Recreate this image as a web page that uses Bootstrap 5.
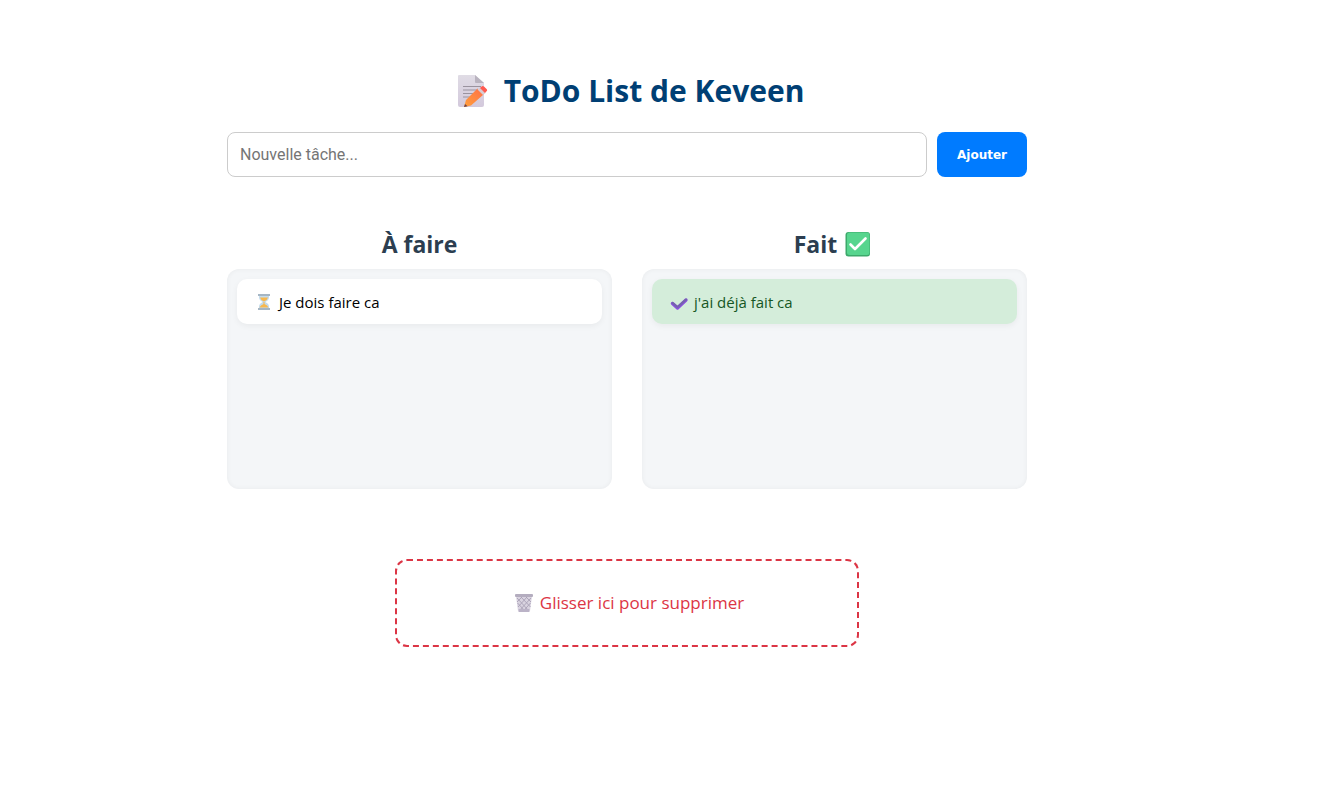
<!DOCTYPE html>
<html lang="fr">
<head>
<meta charset="utf-8">
<meta name="viewport" content="width=device-width, initial-scale=1">
<title>ToDo List de Keveen</title>
<link href="https://cdn.jsdelivr.net/npm/bootstrap@5.3.0/dist/css/bootstrap.min.css" rel="stylesheet">
<style>
  body { font-family: "Open Sans", "Noto Sans", sans-serif; background: #fff; color: #000; padding: 69px 76px 60px 0; }
  .todo-app { max-width: 800px; }
  .todo-title { font-size: 30px; line-height: 44px; font-weight: 700; color: #003f74; margin-bottom: 19px; }
  .todo-form { gap: 10px; }
  .todo-input { height: 45px; padding: 8px 12px; border: 1px solid #ccc; border-radius: 8px; font-family: Roboto, sans-serif; font-size: 16px; line-height: 24px; }
  .todo-input::placeholder { color: #757575; }
  .todo-add { width: 90px; height: 45px; padding: 0; border: 0; border-radius: 8px; background: #007bff; color: #fff; font-family: "DejaVu Sans", sans-serif; font-size: 12px; font-weight: 700; }
  .todo-add:hover { background: #0069d9; color: #fff; }
  .todo-boards { gap: 30px; margin-top: 50px; }
  .todo-heading { font-size: 23px; line-height: 34px; font-weight: 700; color: #2c3e50; margin-bottom: 8px; }
  .todo-list { min-height: 220px; padding: 10px; border-radius: 12px; background: #f4f6f8; box-shadow: inset 0 0 5px rgba(0,0,0,.05); }
  .todo-item { padding: 12px 18px 11px; border-radius: 10px; background: #fff; font-size: 15px; line-height: 22px; box-shadow: 0 2px 6px rgba(0,0,0,.05); cursor: grab; }
  .todo-item.done { background: #d4edda; color: #155724; }
  .todo-trash { width: 58%; height: 88px; margin-top: 70px; border: 2px dashed #dc3545; border-radius: 12px; color: #dc3545; font-size: 17px; gap: 6px; }
</style>
</head>
<body>
<main class="todo-app mx-auto">
  <h1 class="todo-title d-flex justify-content-center align-items-center gap-3 ps-2">
    <svg width="30" height="34" viewBox="0 0 30 34" aria-hidden="true">
      <defs>
        <linearGradient id="paper" x1="0" y1="0" x2="0" y2="1"><stop offset="0" stop-color="#e0dce5"/><stop offset="1" stop-color="#d3c9dc"/></linearGradient>
        <linearGradient id="pencil" x1="1" y1="0" x2="0" y2="1"><stop offset="0" stop-color="#ff7047"/><stop offset="1" stop-color="#ffa03c"/></linearGradient>
      </defs>
      <path d="M1 1h16l9 8v22a2 2 0 0 1-2 2H2a2 2 0 0 1-2-2V2a1 1 0 0 1 1-1z" fill="url(#paper)"/>
      <path d="M17 1l9 8h-8a1 1 0 0 1-1-1z" fill="#b9b3bf"/>
      <path d="M5 12.500h18M5 16h16M5 19.500h14M5 23h9" stroke="#9a939f" stroke-width="1.200"/>
      <path d="M19.500 14.500l6 6L13 31.500l-7 1.500L8 26z" fill="url(#pencil)"/>
      <path d="M7 30L6 33l3.500-.8z" fill="#6a4048"/>
      <path d="M19.500 15.500l2.500-2 5.500 5.500-2.500 2z" fill="#d8ccd2"/>
      <path d="M22 14l2-1.800q1-.7 2 .2l2.800 2.800q.8 1 0 1.800L27 19z" fill="#ff5a50"/>
    </svg>
    <span>ToDo List de Keveen</span>
  </h1>

  <form class="todo-form d-flex" onsubmit="return false">
    <input class="todo-input flex-grow-1" type="text" placeholder="Nouvelle tâche..." aria-label="Nouvelle tâche">
    <button class="btn todo-add" type="submit">Ajouter</button>
  </form>

  <div class="todo-boards d-flex">
    <section class="w-100">
      <h2 class="todo-heading text-center">À faire</h2>
      <ul class="todo-list list-unstyled mb-0">
        <li class="todo-item d-flex align-items-center gap-1" draggable="true">
          <svg width="20" height="18" viewBox="0 0 20 18" aria-hidden="true">
            <path d="M4 3h10v2q0 2-3.500 4 3.500 2 3.500 4v2H4v-2q0-2 3.500-4Q4 7 4 5z" fill="#c5dcec"/>
            <path d="M5 4.500h8q-.5 2.500-4 4-3.500-1.500-4-4zM8.500 9h1v2q3 1 4 3.500h-9q1-2.500 4-3.500z" fill="#f8b84e"/>
            <path d="M3 1h12v2H3zM3 15h12v2H3z" fill="#a5b6c4"/>
          </svg>
          <span>Je dois faire ca</span>
        </li>
      </ul>
    </section>
    <section class="w-100">
      <h2 class="todo-heading d-flex justify-content-center align-items-center gap-2 pe-1">
        <span>Fait</span>
        <svg width="26" height="26" viewBox="0 0 26 26" aria-hidden="true">
          <rect x=".5" y="1" width="24.500" height="24.500" rx="3" fill="#3ca96b"/>
          <rect x="2" y="1.500" width="22.500" height="22.500" rx="2.500" fill="#57d58e"/>
          <path d="M5.500 13.500l4.500 4.500L20.500 7.500" fill="none" stroke="#fff" stroke-width="2.600" stroke-linecap="round" stroke-linejoin="round"/>
        </svg>
      </h2>
      <ul class="todo-list list-unstyled mb-0">
        <li class="todo-item done d-flex align-items-center gap-1" draggable="true">
          <svg width="20" height="18" viewBox="0 0 20 18" aria-hidden="true">
            <path d="M2.500 10.500l5 4.500 8.500-8" fill="none" stroke="#8950dc" stroke-width="3.400" stroke-linecap="round" stroke-linejoin="round"/>
            <path d="M2.500 9.800l5 4.200 8.500-7.500" fill="none" stroke="#7562ad" stroke-width="2" stroke-linecap="round" stroke-linejoin="round"/>
          </svg>
          <span>j'ai déjà fait ca</span>
        </li>
      </ul>
    </section>
  </div>

  <div class="todo-trash mx-auto d-flex justify-content-center align-items-center ps-1">
    <svg width="20" height="20" viewBox="0 0 20 20" aria-hidden="true">
      <path d="M2 3h16l-2 15a1 1 0 0 1-1 1H5a1 1 0 0 1-1-1z" fill="#d9d3e0"/>
      <path d="M3 5l12 13M7 4l9.500 10M12 4l5 5M3.500 10l8 8.500M17 5L5 18M13 4L4 14M8 4L3 9M16.500 10L9 18.500" stroke="#a8a0b5" stroke-width=".9"/>
      <path d="M4.500 16h11l-.5 3H5z" fill="#bbb3c7"/>
      <rect x="1" y="1" width="18" height="3" rx="1" fill="#b4adbf"/>
    </svg>
    <span>Glisser ici pour supprimer</span>
  </div>
</main>
<script src="https://cdn.jsdelivr.net/npm/bootstrap@5.3.0/dist/js/bootstrap.bundle.min.js"></script>
</body>
</html>
